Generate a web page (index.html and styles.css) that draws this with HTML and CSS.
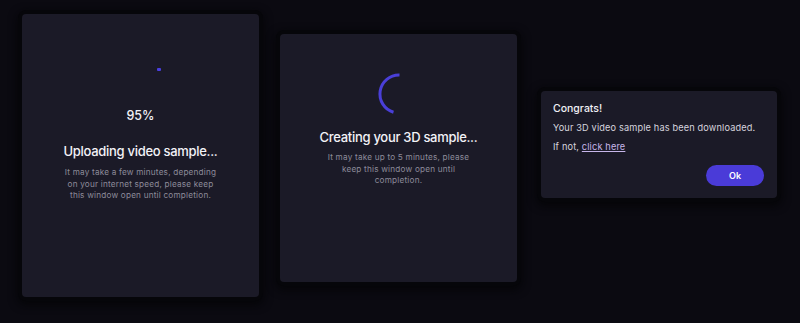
FILE: index.html
```html
<!DOCTYPE html>
<html lang="en">
<head>
<meta charset="utf-8">
<title>Upload states</title>
<link rel="stylesheet" href="styles.css">
</head>
<body>
<main class="stage">
  <section class="card card-upload">
    <div class="progress-spot"><span class="dot"></span></div>
    <div class="percent">95%</div>
    <h2 class="title">Uploading video sample...</h2>
    <p class="desc">It may take a few minutes, depending<br>on your internet speed, please keep<br>this window open until completion.</p>
  </section>

  <section class="card card-create">
    <svg class="spinner" width="44" height="44" viewBox="0 0 44 44" aria-hidden="true">
      <path d="M22.5 3 A19 19 0 0 0 16.5 40.2" fill="none" stroke="#4a3fd8" stroke-width="3" stroke-linecap="butt"/>
    </svg>
    <h2 class="title">Creating your 3D sample...</h2>
    <p class="desc">It may take up to 5 minutes, please<br>keep this window open until<br>completion.</p>
  </section>

  <section class="card card-dialog">
    <h3 class="dlg-title">Congrats!</h3>
    <p class="dlg-text">Your 3D video sample has been downloaded.</p>
    <p class="dlg-text">If not, <a href="#" class="link">click here</a></p>
    <div class="actions"><button class="btn">Ok</button></div>
  </section>
</main>
</body>
</html>
```

FILE: styles.css
```css
* { box-sizing: border-box; }
html, body { margin: 0; padding: 0; }
body {
  background: #0b0a11;
  width: 800px;
  height: 323px;
  overflow: hidden;
  font-family: Inter, "Noto Sans", sans-serif;
  color: #f1f0f5;
}
.stage {
  display: flex;
  align-items: flex-start;
  padding-left: 22px;
}
.card {
  background: #1b1a27;
  border-radius: 4px;
  box-shadow: 0 0 0 4px #06060a, 0 3px 8px 5px #050508;
}
.card-upload {
  width: 237px;
  height: 283px;
  margin-top: 14px;
  display: flex;
  flex-direction: column;
  align-items: center;
  padding-top: 54px;
}
.progress-spot {
  width: 100%;
  height: 40px;
  display: flex;
  justify-content: center;
}
.dot {
  width: 4px;
  height: 3px;
  background: #4a3fe0;
  margin-left: 37px;
  border-radius: 1px;
}
.percent {
  font-size: 12.5px;
  font-weight: 500;
  line-height: 16px;
  margin-top: 0;
}
.title {
  margin: 0;
  font-size: 13px;
  font-weight: 500;
  line-height: 18px;
  letter-spacing: -0.3px;
  color: #f3f2f7;
}
.card-upload .title { margin-top: 18px; }
.desc {
  margin: 6px 0 0;
  font-size: 8.2px;
  line-height: 11.6px;
  letter-spacing: 0.2px;
  color: #8d8b9a;
  text-align: center;
}
.card-upload .desc { margin-top: 7px; }
.card-create {
  width: 237px;
  height: 248px;
  margin-top: 34px;
  margin-left: 21px;
  display: flex;
  flex-direction: column;
  align-items: center;
  padding-top: 38px;
}
.spinner { display: block; }
.card-create .title { margin-top: 12px; }
.card-create .desc { margin-top: 6px; }
.card-dialog {
  width: 236px;
  height: 107px;
  margin-top: 91px;
  margin-left: 24px;
  padding: 11px 13px 0 12px;
}
.dlg-title {
  margin: 0;
  font-size: 10.5px;
  font-weight: 500;
  line-height: 14px;
}
.dlg-text {
  margin: 5px 0 0;
  font-size: 9.2px;
  line-height: 14px;
  letter-spacing: 0.15px;
  color: #d6d4de;
}
.link {
  color: #c7b6ea;
  text-decoration: underline;
  text-underline-offset: 1px;
}
.actions {
  display: flex;
  justify-content: flex-end;
  margin-top: 11px;
}
.btn {
  width: 58px;
  height: 21px;
  border: none;
  border-radius: 11px;
  background: #4a3bd8;
  color: #ffffff;
  font-family: inherit;
  font-size: 9px;
  font-weight: 600;
  padding: 0;
}
```
